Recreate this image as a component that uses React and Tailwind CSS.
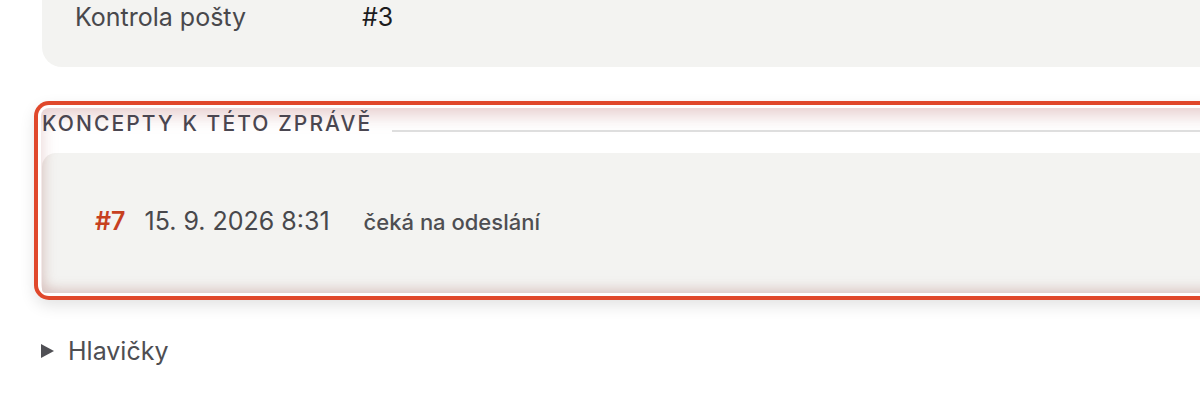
import React from 'react';

const font = { fontFamily: 'Inter, "Noto Sans", sans-serif' };

const DraftRow = ({ id, date, status }) => (
  <div className="flex items-baseline">
    <span className="text-[25px] font-semibold text-[#c7401f]">#{id}</span>
    <span className="ml-[19px] text-[25px] text-[#48484c]">{date}</span>
    <span className="ml-[34px] text-[22px] font-medium text-[#4e4e52]">{status}</span>
  </div>
);

export default function App() {
  return (
    <div className="w-[1200px] h-[400px] overflow-hidden bg-white" style={font}>
      <div className="ml-[42px] w-[1300px]">
        {/* previous card, cut off at the top */}
        <div className="h-[67px] bg-[#f3f3f1] rounded-bl-[20px] pl-[33px] pt-[2px]">
          <div className="grid grid-cols-[287px_1fr] text-[25px] leading-[30px]">
            <span className="text-[#48484c]">Kontrola pošty</span>
            <span className="text-[#1c1c1e]">#3</span>
          </div>
        </div>

        {/* highlighted drafts section */}
        <section className="mt-[41px] -ml-[1px] h-[185px] rounded-[8px] bg-white shadow-[0_0_0_3px_#ffffff,0_0_0_7px_#e0482b,0_6px_16px_6px_rgba(0,0,0,0.12),inset_0_8px_16px_rgba(190,120,120,0.35)]">
          <div className="flex items-center h-[30px] pt-[2px]">
            <h2 className="text-[21px] font-medium tracking-[0.1em] uppercase text-[#4a4650] leading-[26px] pl-[1px]">
              Koncepty k této zprávě
            </h2>
            <div className="flex-1 ml-[20px] mt-[14px] h-[2px] bg-[#dedede]" />
          </div>
          <div className="mt-[15px] h-[140px] ml-[1px] rounded-tl-[14px] rounded-bl-[4px] bg-[#f3f3f1] flex items-center pl-[53px] pb-[2px] shadow-[inset_8px_-10px_12px_-6px_rgba(175,115,110,0.35)]">
            <DraftRow id={7} date="15. 9. 2026 8:31" status="čeká na odeslání" />
          </div>
        </section>

        {/* collapsed headers */}
        <div className="mt-[43px] -ml-[1px] flex items-center text-[25px] leading-[30px] text-[#4e4e52]">
          <svg width="13" height="14" viewBox="0 0 13 14" className="mr-[14px]">
            <path d="M0 0 L13 7 L0 14 Z" fill="#505055" />
          </svg>
          <span>Hlavičky</span>
        </div>
      </div>
    </div>
  );
}
